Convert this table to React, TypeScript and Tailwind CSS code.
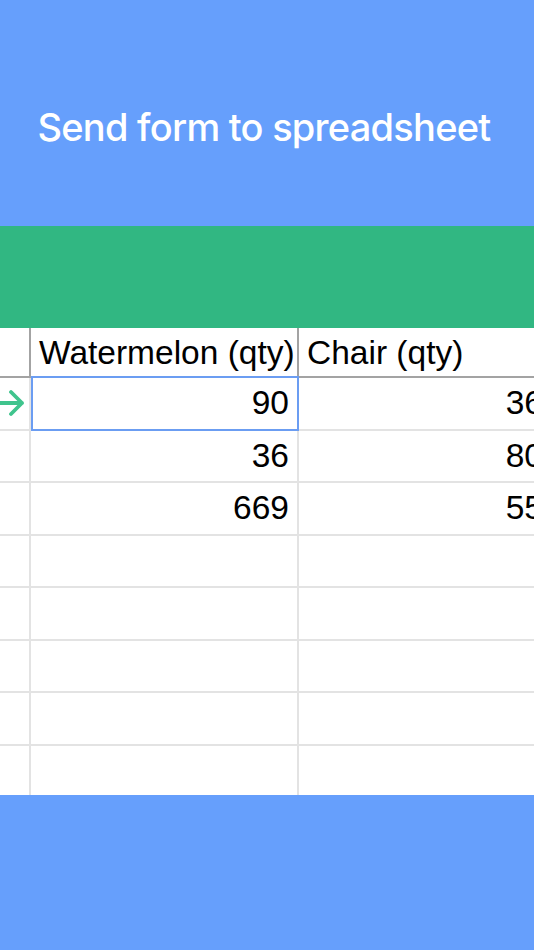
import React from "react";

const rows = [
  ["90", "36"],
  ["36", "80"],
  ["669", "55"],
  ["", ""],
  ["", ""],
  ["", ""],
  ["", ""],
  ["", ""],
];

export default function App() {
  return (
    <div className="w-[534px] h-[950px] overflow-hidden flex flex-col bg-white" style={{ fontFamily: "'Liberation Sans', Arial, sans-serif" }}>
      <div className="h-[226px] bg-[#669ffc] shrink-0 flex justify-center pr-[6px]">
        <div
          className="pt-[103px] text-white text-[38px] font-medium leading-[48px] tracking-[-0.75px]"
          style={{ fontFamily: "Inter, 'Noto Sans', sans-serif" }}
        >
          Send form to spreadsheet
        </div>
      </div>
      <div className="h-[102px] bg-[#31b782] shrink-0" />
      <div className="flex-1 overflow-hidden flex flex-col text-black text-[33.5px]">
        <div className="h-[50px] shrink-0 flex border-b-2 border-[#a3a3a3]">
          <div className="w-[31px] shrink-0 border-r-2 border-[#a3a3a3]" />
          <div className="w-[268px] shrink-0 border-r-2 border-[#a3a3a3] pl-[8px] leading-[50px] whitespace-nowrap">
            Watermelon (qty)
          </div>
          <div className="w-[260px] shrink-0 pl-[8px] leading-[50px] whitespace-nowrap">Chair (qty)</div>
        </div>
        {rows.map((r, i) => (
          <div key={i} className="h-[52.5px] shrink-0 flex border-b-2 border-[#e3e3e3]">
            <div className="w-[31px] shrink-0 border-r-2 border-[#e3e3e3] flex items-center">
              {i === 0 && (
                <svg width="26" height="28" viewBox="0 0 26 28" fill="none" stroke="#3fc48d" strokeWidth="3.8" strokeLinecap="round" strokeLinejoin="round">
                  <path d="M-3 14H22M11 3l11 11-11 11" />
                </svg>
              )}
            </div>
            <div className="relative w-[268px] shrink-0 border-r-2 border-[#e3e3e3] pr-[8px] text-right leading-[50px]">
              {r[0]}
              {i === 0 && (
                <div className="absolute left-0 top-[-2px] right-[-2px] bottom-[-2px] border-2 border-[#6b9df2]" />
              )}
            </div>
            <div className="w-[252px] shrink-0 pr-[8px] text-right leading-[50px] whitespace-nowrap">{r[1]}</div>
          </div>
        ))}
      </div>
      <div className="h-[155px] bg-[#669ffc] shrink-0" />
    </div>
  );
}
